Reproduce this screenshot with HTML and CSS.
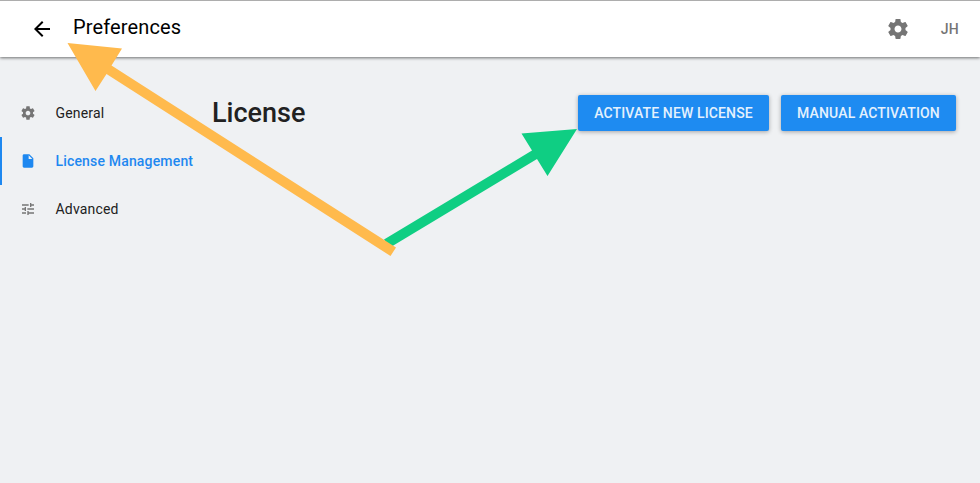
FILE: index.html
```html
<!DOCTYPE html>
<html lang="en">
<head>
<meta charset="utf-8">
<title>Preferences</title>
<link rel="stylesheet" href="styles.css">
</head>
<body>
<svg class="defs" aria-hidden="true">
  <symbol id="gear" viewBox="0 0 24 24"><path d="M19.43 12.98c.04-.32.07-.64.07-.98s-.03-.66-.07-.98l2.11-1.65c.19-.15.24-.42.12-.64l-2-3.46c-.12-.22-.39-.3-.61-.22l-2.49 1c-.52-.4-1.08-.73-1.69-.98l-.38-2.65C14.46 2.18 14.25 2 14 2h-4c-.25 0-.46.18-.49.42l-.38 2.65c-.61.25-1.17.59-1.69.98l-2.49-1c-.23-.09-.49 0-.61.22l-2 3.46c-.13.22-.07.49.12.64l2.11 1.65c-.04.32-.07.65-.07.98s.03.66.07.98l-2.11 1.65c-.19.15-.24.42-.12.64l2 3.46c.12.22.39.3.61.22l2.49-1c.52.4 1.08.73 1.69.98l.38 2.65c.03.24.24.42.49.42h4c.25 0 .46-.18.49-.42l.38-2.65c.61-.25 1.17-.59 1.69-.98l2.49 1c.23.09.49 0 .61-.22l2-3.46c.12-.22.07-.49-.12-.64l-2.11-1.65zM12 15.5c-1.93 0-3.5-1.57-3.5-3.5s1.57-3.5 3.5-3.5 3.5 1.57 3.5 3.5-1.57 3.5-3.5 3.5z"/></symbol>
</svg>
<header class="topbar">
  <svg class="back" viewBox="0 0 24 24"><path d="M20 11H7.83l5.59-5.59L12 4l-8 8 8 8 1.41-1.41L7.83 13H20v-2z"/></svg>
  <h1 class="title">Preferences</h1>
  <svg class="settings"><use href="#gear"/></svg>
  <span class="user">JH</span>
</header>
<div class="layout">
  <nav class="sidebar">
    <a class="item"><svg class="icon"><use href="#gear"/></svg><span>General</span></a>
    <a class="item active"><svg class="icon" viewBox="0 0 24 24"><path d="M6 2c-1.1 0-1.99.9-1.99 2L4 20c0 1.1.89 2 1.99 2H18c1.1 0 2-.9 2-2V8l-6-6H6zm7 7V3.5L18.5 9H13z"/></svg><span>License Management</span></a>
    <a class="item"><svg class="icon" viewBox="0 0 24 24"><path d="M3 17v2h6v-2H3zM3 5v2h10V5H3zm10 16v-2h8v-2h-8v-2h-2v6h2zM7 9v2H3v2h4v2h2V9H7zm14 4v-2H11v2h10zm-6-4h2V7h4V5h-4V3h-2v6z"/></svg><span>Advanced</span></a>
  </nav>
  <main class="content">
    <h2 class="heading">License</h2>
    <button class="btn activate">ACTIVATE NEW LICENSE</button>
    <button class="btn manual">MANUAL ACTIVATION</button>
  </main>
</div>
<svg class="arrows" viewBox="0 0 980 483">
  <path fill="#0fce83" d="M384 239.500 532 150.500 521.500 133.500 577 129 547.500 176 537 159 390 247.500z"/>
  <path fill="#ffba4d" d="M67.500 43 122 48.500 111.500 65.500 396 247.500 390.500 256 106.500 74 95.500 91z"/>
</svg>
</body>
</html>
```

FILE: styles.css
```css
* { box-sizing: border-box; }
body {
  margin: 0;
  height: 483px;
  overflow: hidden;
  background: #eff1f3;
  color: #212121;
  font-family: Roboto, sans-serif;
}
.defs { position: absolute; width: 0; height: 0; }
.topbar {
  display: flex;
  align-items: center;
  height: 57px;
  padding: 0 21px 0 30px;
  background: #fff;
  border-top: 1px solid #adadad;
  box-shadow: 0 1px 3px rgba(0, 0, 0, .55);
}
.back { width: 24px; height: 24px; fill: #000; }
.title {
  margin: 0 auto 4px 19px;
  color: #000;
  font-size: 20px;
  font-weight: 400;
  line-height: 24px;
  letter-spacing: .13px;
}
.settings { width: 24px; height: 24px; fill: #757575; }
.user {
  margin-left: 31px;
  color: #757575;
  font-size: 14px;
  font-weight: 500;
  letter-spacing: .3px;
}
.layout { display: flex; padding-top: 32px; }
.sidebar { width: 212px; }
.item {
  display: flex;
  align-items: center;
  height: 48px;
  padding-left: 18px;
  border-left: 2px solid transparent;
  font-size: 14px;
  letter-spacing: .18px;
  white-space: nowrap;
}
.item.active { color: #1e88f0; border-color: #1e88f0; font-weight: 500; letter-spacing: .17px; }
.icon { width: 16px; height: 16px; margin-right: 19.5px; fill: #757575; }
.active .icon { fill: #1e88f0; }
.content {
  display: flex;
  flex: 1;
  align-items: center;
  height: 48px;
  padding-right: 24px;
}
.heading {
  margin: 0 auto 0 0;
  font-size: 27px;
  font-weight: 500;
  line-height: 36px;
}
.btn {
  height: 36px;
  padding: 0;
  border: 0;
  border-radius: 2px;
  background: #1e8bf1;
  color: #e4f1fd;
  font: 500 14px Roboto, sans-serif;
  letter-spacing: .13px;
  box-shadow: 0 1px 4px rgba(0, 0, 0, .32);
}
.activate { width: 191px; }
.manual { width: 175px; margin-left: 12px; }
.arrows {
  position: absolute;
  top: 0;
  left: 0;
  width: 980px;
  height: 483px;
  pointer-events: none;
}
```
